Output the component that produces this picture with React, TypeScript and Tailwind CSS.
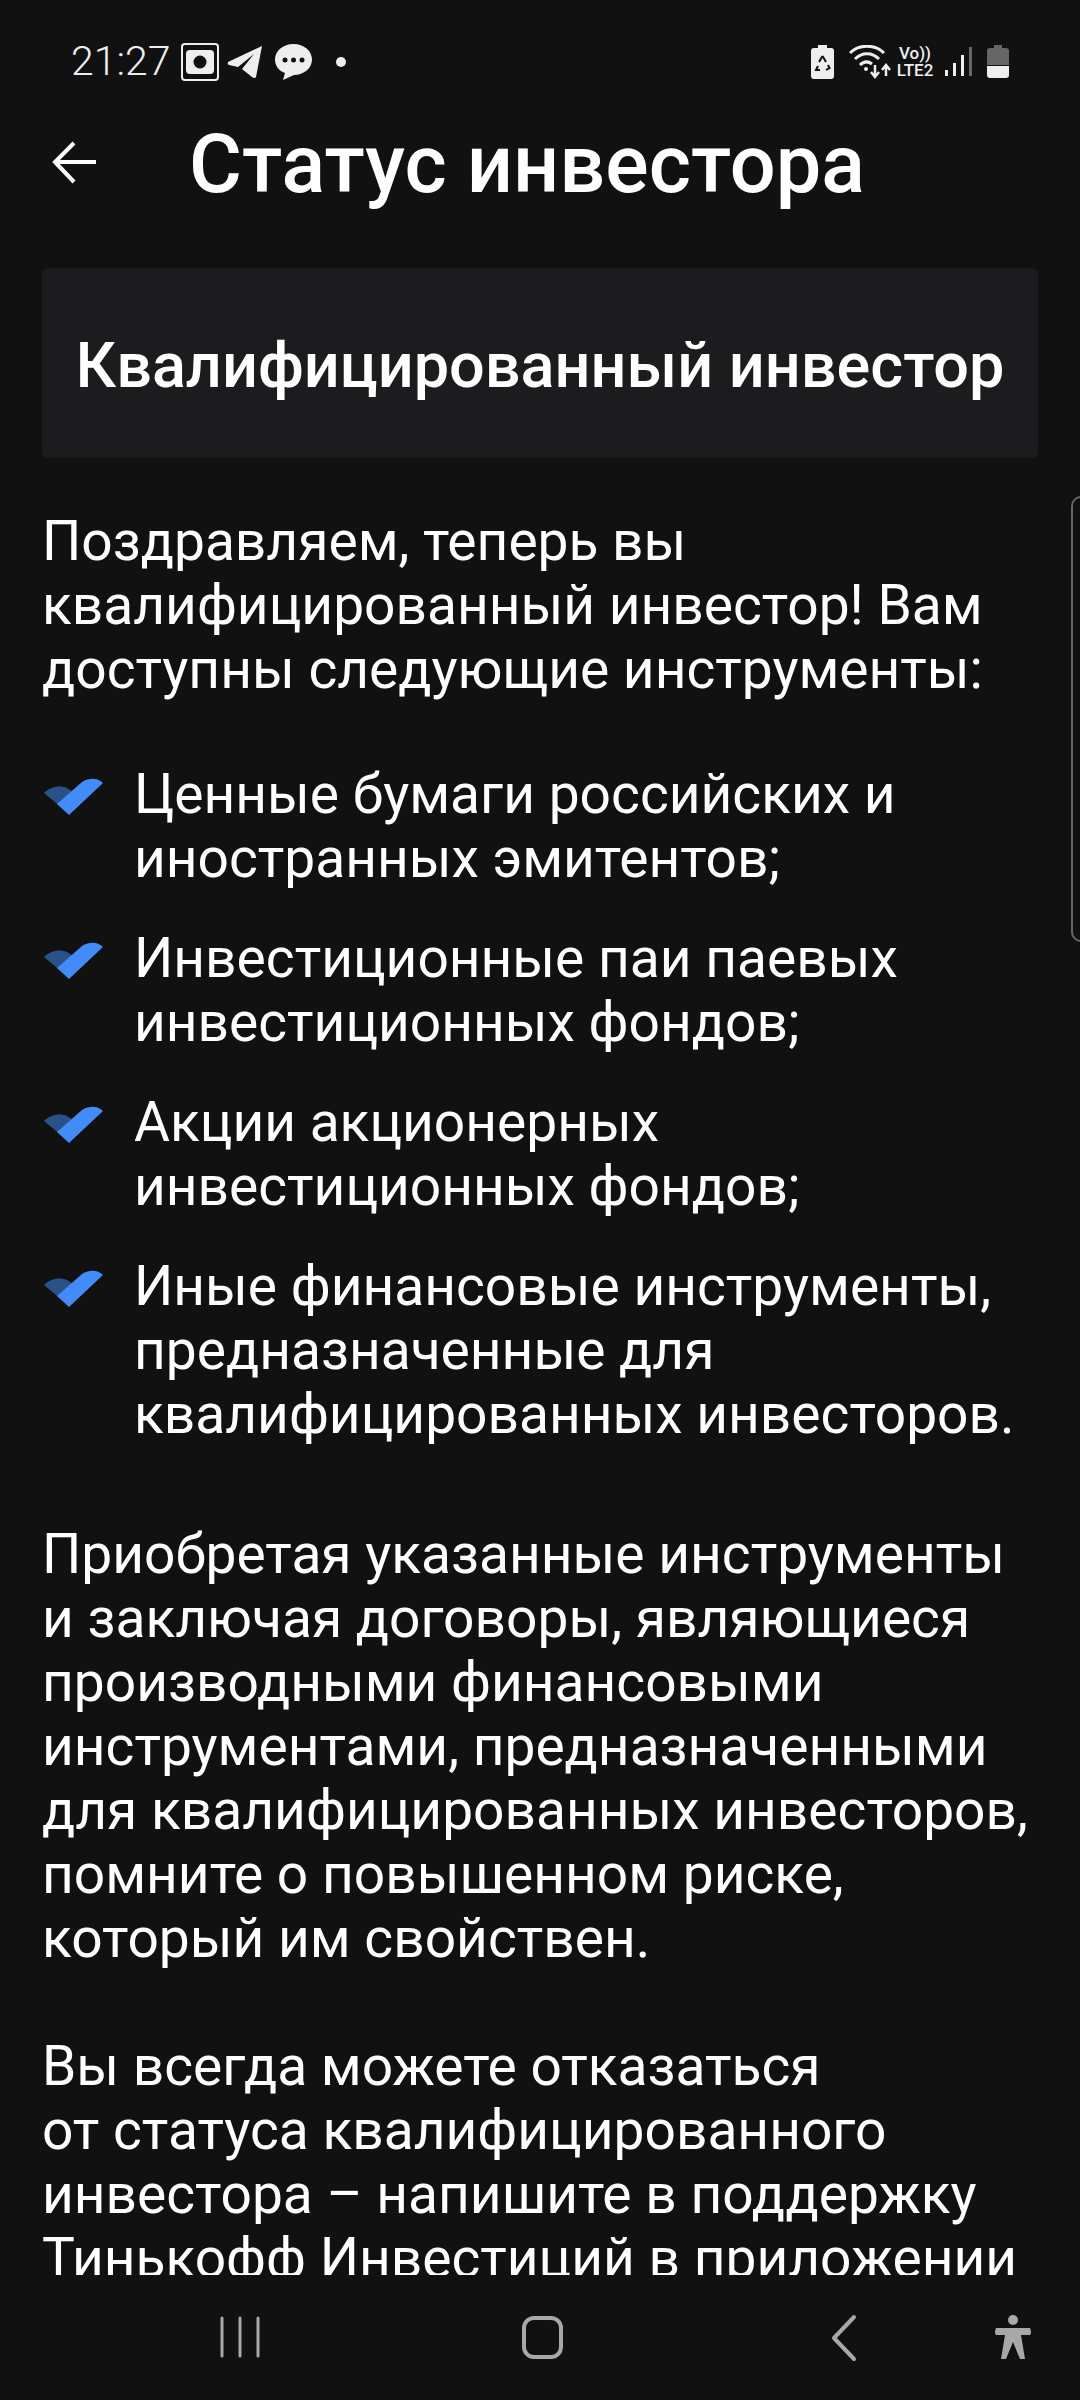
const items = [
  ["Ценные бумаги российских и", "иностранных эмитентов;"],
  ["Инвестиционные паи паевых", "инвестиционных фондов;"],
  ["Акции акционерных", "инвестиционных фондов;"],
  ["Иные финансовые инструменты,", "предназначенные для", "квалифицированных инвесторов."],
];

const paragraph = [
  "Приобретая указанные инструменты",
  "и заключая договоры, являющиеся",
  "производными финансовыми",
  "инструментами, предназначенными",
  "для квалифицированных инвесторов,",
  "помните о повышенном риске,",
  "который им свойствен.",
];

const lastParagraph = [
  "Вы всегда можете отказаться",
  "от статуса квалифицированного",
  "инвестора – напишите в поддержку",
  "Тинькофф Инвестиций в приложении",
];

function Check() {
  return (
    <svg width="60" height="40" viewBox="0 0 60 40" className="shrink-0">
      <path d="M0 15 C8 7 22 6 29 15 L32 20 L18 30 Z" fill="#2b5288" />
      <path d="M13 26 L38 4 C46 -1 54 0 59 5 L25 37 Z" fill="#428bf9" />
    </svg>
  );
}

function StatusBar() {
  return (
    <div className="h-[122px] flex items-center justify-between pl-[71px] pr-[71px] pt-[1px] text-[#eeeeee]">
      <div className="flex items-center">
        <span className="text-[41px] leading-none font-light">21:27</span>
        <svg width="38" height="38" viewBox="0 0 38 38" className="ml-[10px]">
          <rect x="1" y="1" width="36" height="36" rx="3" fill="none" stroke="#eeeeee" strokeWidth="2" />
          <rect x="5" y="7" width="28" height="24" rx="4" fill="#eeeeee" />
          <circle cx="19" cy="19" r="6.5" fill="#111111" />
        </svg>
        <svg width="36" height="34" viewBox="0 0 36 34" className="ml-[8px]">
          <path d="M1 17 L35 1 L29 32 Q28 34 25 32 L15 24 L27 9 L11 22 L2 20 Q0 19 1 17 Z" fill="#eeeeee" />
        </svg>
        <svg width="37" height="36" viewBox="0 0 37 36" className="ml-[12px]">
          <path d="M18.5 0 C29 0 37 7 37 15.5 C37 24 29 31 19 31 L8 36 L10 29 C4 27 0 22 0 15.5 C0 7 8 0 18.5 0 Z" fill="#eeeeee" />
          <circle cx="10" cy="16" r="2.5" fill="#111111" />
          <circle cx="18.5" cy="16" r="2.5" fill="#111111" />
          <circle cx="27" cy="16" r="2.5" fill="#111111" />
        </svg>
        <span className="ml-[24px] w-[10px] h-[10px] rounded-full bg-[#eeeeee]" />
      </div>
      <div className="flex items-center">
        <svg width="23" height="34" viewBox="0 0 23 34">
          <path d="M7 0 H16 V3 H20 Q23 3 23 6 V31 Q23 34 20 34 H3 Q0 34 0 31 V6 Q0 3 3 3 H7 Z" fill="#eeeeee" />
          <path d="M11.5 11 L15 17 M17 20 L18.500 23 L15 25 M9 25 H5 L7 21 M8 17 L11.500 11" stroke="#111111" strokeWidth="2" fill="none" />
        </svg>
        <svg width="42" height="34" viewBox="0 0 42 34" className="ml-[15px]">
          <path d="M1 8 C10 -1 26 -1 35 8" stroke="#eeeeee" strokeWidth="3" fill="none" />
          <path d="M6 14 C13 7 23 7 30 14" stroke="#eeeeee" strokeWidth="3" fill="none" />
          <path d="M11 20 C15 16 19 16 23 19" stroke="#eeeeee" strokeWidth="3" fill="none" />
          <circle cx="17" cy="24" r="2" fill="#eeeeee" />
          <path d="M26 20 V31 M22 27 L26 32 L30 27" stroke="#eeeeee" strokeWidth="2.500" fill="none" />
          <path d="M37 31 V21 M33 25 L37 20 L41 25" stroke="#eeeeee" strokeWidth="2.500" fill="none" />
        </svg>
        <div className="ml-[3px] w-[42px] flex flex-col items-center font-medium text-[17px] leading-[17px] text-[#eeeeee]">
          <span>Vo))</span>
          <span>LTE2</span>
        </div>
        <div className="ml-[9px] flex items-end gap-[5px] h-[29px]">
          <span className="w-[3px] h-[6px] bg-[#eeeeee]" />
          <span className="w-[3px] h-[13px] bg-[#eeeeee]" />
          <span className="w-[3px] h-[21px] bg-[#eeeeee]" />
          <span className="w-[3px] h-[29px] bg-[#666666]" />
        </div>
        <svg width="22" height="33" viewBox="0 0 22 33" className="ml-[15px]">
          <path d="M7 0 H15 V3 H19 Q22 3 22 6 V20 H0 V6 Q0 3 3 3 H7 Z" fill="#666666" />
          <path d="M0 21 H22 V30 Q22 33 19 33 H3 Q0 33 0 30 Z" fill="#eeeeee" />
        </svg>
      </div>
    </div>
  );
}

export default function App() {
  return (
    <div className="relative w-[1080px] h-[2400px] bg-[#111112] text-white font-['Roboto',sans-serif] flex flex-col overflow-hidden">
      <StatusBar />
      <div className="flex items-center h-[84px] pl-[52px]">
        <svg width="44" height="44" viewBox="0 0 44 44" fill="none" stroke="white" strokeWidth="4" className="mb-[3px]">
          <path d="M44 21 H3 M22 2 L3 21 L22 41" />
        </svg>
        <h1 className="ml-[93px] text-[81px] leading-none font-medium">Статус инвестора</h1>
      </div>
      <div className="flex-1 overflow-hidden px-[42px] pt-[62px]">
        <div className="h-[190px] rounded-[6px] bg-[#1c1c1e] flex items-center justify-center pt-[4px]">
          <h2 className="text-[63px] leading-none font-medium">Квалифицированный инвестор</h2>
        </div>
        <div className="mt-[51px] text-[55.1px] leading-[64px] whitespace-nowrap">
          <p>
            Поздравляем, теперь вы
            <br />
            квалифицированный инвестор! Вам
            <br />
            доступны следующие инструменты:
          </p>
          <div className="mt-[61px] flex flex-col gap-[36px]">
            {items.map((lines) => (
              <div key={lines[0]} className="flex">
                <div className="pl-[2px] pt-[16px] w-[92px]">
                  <Check />
                </div>
                <div>
                  {lines.map((l) => (
                    <div key={l}>{l}</div>
                  ))}
                </div>
              </div>
            ))}
          </div>
          <div className="mt-[76px]">
            {paragraph.map((l) => (
              <div key={l}>{l}</div>
            ))}
          </div>
          <div className="mt-[64px]">
            {lastParagraph.map((l) => (
              <div key={l}>{l}</div>
            ))}
          </div>
        </div>
      </div>
      <div className="h-[125px] flex items-start relative">
        <svg width="1080" height="70" viewBox="0 0 1080 70" className="mt-[25px]" fill="none" stroke="#a8a8a8">
          <path d="M222 18 V56 M240 18 V56 M258 18 V56" strokeWidth="3" strokeLinecap="round" />
          <rect x="524" y="18" width="37" height="39" rx="10" strokeWidth="4" />
          <path d="M854 17 L834 38 L854 59" strokeWidth="4" strokeLinecap="round" strokeLinejoin="round" />
          <circle cx="1013" cy="20" r="5" fill="#a8a8a8" stroke="none" />
          <path d="M996 28 H1030 Q1032 33 1030 35 L1021 35 L1025 59 H1020 L1013 42 L1006 59 H1001 L1005 35 L996 35 Q994 33 996 28 Z" fill="#a8a8a8" stroke="none" />
        </svg>
      </div>
      <div className="absolute left-[1071px] top-[496px] w-[12px] h-[446px] rounded-l-[10px] border-2 border-[#666666]" />
    </div>
  );
}
